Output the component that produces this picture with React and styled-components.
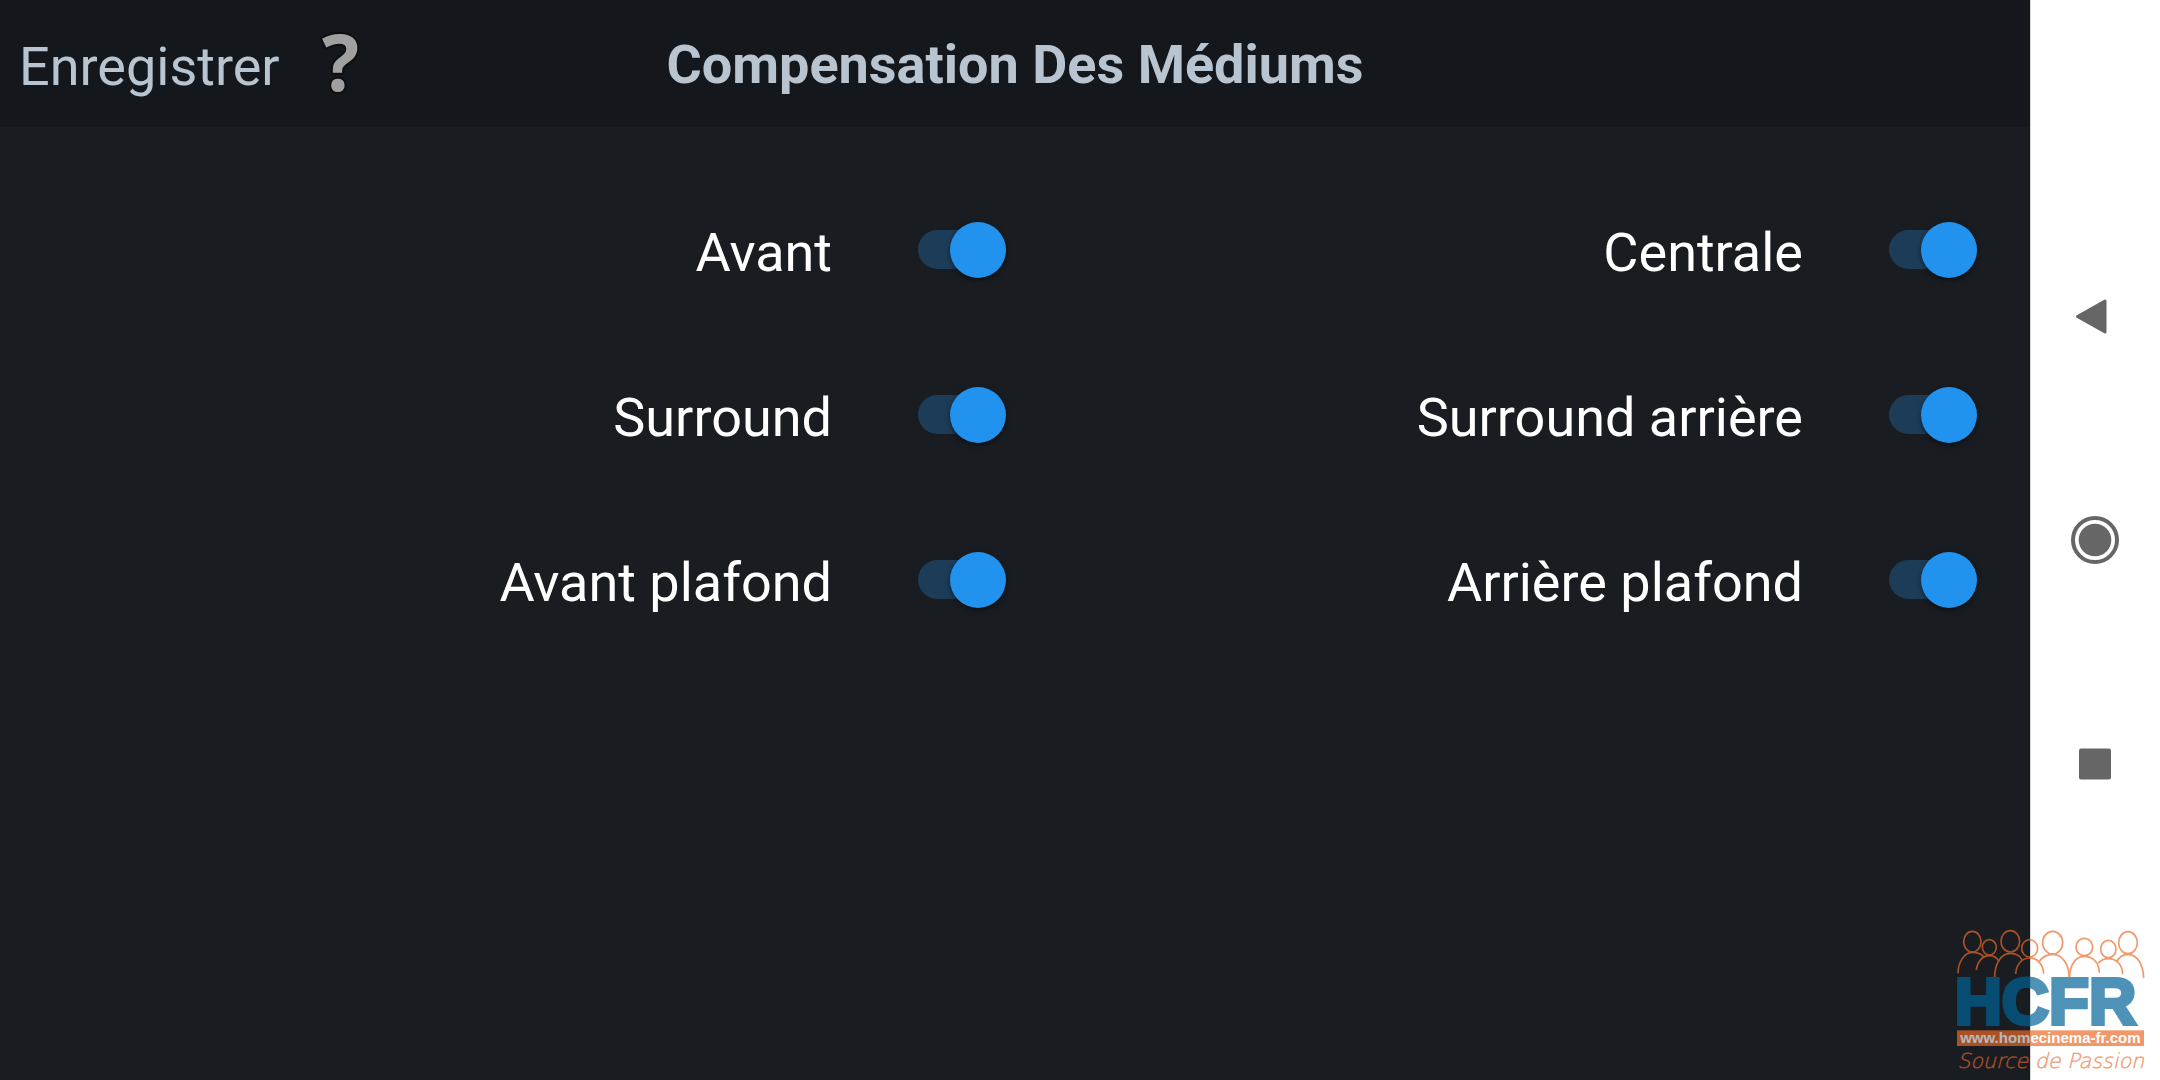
import React, { useState } from 'react';
import styled, { createGlobalStyle } from 'styled-components';

const channels = [
  { id: 'front', name: 'Avant' },
  { id: 'center', name: 'Centrale' },
  { id: 'surround', name: 'Surround' },
  { id: 'surroundBack', name: 'Surround arrière' },
  { id: 'topFront', name: 'Avant plafond' },
  { id: 'topRear', name: 'Arrière plafond' },
];

const App = () => {
  const [enabled, setEnabled] = useState({
    front: true,
    center: true,
    surround: true,
    surroundBack: true,
    topFront: true,
    topRear: true,
  });

  const handleToggle = (id) => {
    setEnabled({ ...enabled, [id]: !enabled[id] });
  };

  return (
    <Page>
      <GlobalStyle />
      <Screen>
        <Header>
          <HeaderActions>
            <SaveButton type="button">Enregistrer</SaveButton>
            <HelpButton type="button">?</HelpButton>
          </HeaderActions>
          <Title>Compensation Des Médiums</Title>
        </Header>
        <ChannelGrid>
          {channels.map((channel) => (
            <ChannelRow key={channel.id}>
              <ChannelLabel htmlFor={channel.id}>{channel.name}</ChannelLabel>
              <Switch
                type="checkbox"
                id={channel.id}
                checked={enabled[channel.id]}
                onChange={() => handleToggle(channel.id)}
              />
            </ChannelRow>
          ))}
        </ChannelGrid>
      </Screen>

      <NavBar>
        <NavButton type="button" aria-label="Back">
          <svg width="48" height="48" viewBox="0 0 48 48">
            <path
              d="M6.5 24.5 L34 9 V40 Z"
              fill="#666"
              stroke="#666"
              strokeWidth="3"
              strokeLinejoin="round"
            />
          </svg>
        </NavButton>
        <NavButton type="button" aria-label="Home">
          <svg width="48" height="48" viewBox="0 0 48 48">
            <circle cx="24" cy="24" r="22" fill="none" stroke="#666" strokeWidth="4" />
            <circle cx="24" cy="24" r="16.3" fill="#666" />
          </svg>
        </NavButton>
        <NavButton type="button" aria-label="Recents">
          <svg width="48" height="48" viewBox="0 0 48 48">
            <rect x="8" y="8.5" width="32" height="31" rx="2" fill="#666" />
          </svg>
        </NavButton>
      </NavBar>

      <Watermark viewBox="30 30 600 480">
        <g fill="none" stroke="#ec6a27" strokeWidth="5">
          <ellipse cx="97" cy="95" rx="26" ry="31" />
          <ellipse cx="148" cy="112" rx="21" ry="23" />
          <ellipse cx="211" cy="94" rx="28" ry="32" />
          <ellipse cx="269" cy="115" rx="24" ry="26" />
          <ellipse cx="338" cy="98" rx="30" ry="34" />
          <ellipse cx="433" cy="111" rx="25" ry="26" />
          <ellipse cx="505" cy="117" rx="23" ry="26" />
          <ellipse cx="564" cy="98" rx="28" ry="33" />
          <path d="M54 190 C54 158 72 127 97 127 C112 127 124 132 131 140" />
          <path d="M109 180 C112 154 128 137 148 137 C162 137 172 144 177 155" />
          <path d="M164 203 C164 160 184 130 211 130 C228 130 240 138 247 150" />
          <path d="M227 192 C229 162 246 144 269 144 C293 144 309 163 311 191" />
          <path d="M298 154 C308 140 322 133 338 133 C367 133 387 163 388 204" />
          <path d="M388 204 C390 162 408 139 433 139 C460 139 477 158 478 188" />
          <path d="M475 160 C483 150 493 146 505 146 C531 146 547 165 548 193" />
          <path d="M529 156 C537 141 549 133 564 133 C592 133 610 165 611 204" />
        </g>
        <BrandText x="44" y="343">HCFR</BrandText>
        <rect x="51" y="361" width="561" height="47" fill="#ec6a27" />
        <SiteText x="331" y="398">www.homecinema-fr.com</SiteText>
        <SloganText x="332" y="475">Source de Passion</SloganText>
      </Watermark>
    </Page>
  );
};

const GlobalStyle = createGlobalStyle`
  * {
    box-sizing: border-box;
  }
  body {
    margin: 0;
    background-color: #191c21;
    font-family: Roboto, "Liberation Sans", sans-serif;
  }
`;

const Page = styled.div`
  position: relative;
  display: flex;
  min-height: 100vh;
`;

const Screen = styled.main`
  flex: 1;
  background-color: #191c21;
`;

const Header = styled.header`
  display: grid;
  grid-template-columns: 1fr auto 1fr;
  align-items: center;
  height: 127px;
  padding: 0 19px;
  background-color: #14181c;
  color: #b8c4d0;
`;

const HeaderActions = styled.div`
  display: flex;
  align-items: center;
  gap: 42px;
`;

const HeaderButton = styled.button`
  padding: 0;
  border: none;
  background: none;
  color: inherit;
  cursor: pointer;
`;

const SaveButton = styled(HeaderButton)`
  padding-top: 6px;
  font-family: inherit;
  font-size: 54px;
`;

const HelpButton = styled(HeaderButton)`
  padding-bottom: 6px;
  color: #a0a0a0;
  font-family: "Noto Sans", sans-serif;
  font-size: 78px;
  font-weight: bold;
  line-height: 100px;
  -webkit-text-stroke: 4px #0d0f11;
  paint-order: stroke fill;
`;

const Title = styled.h1`
  margin: 0;
  padding-top: 2px;
  font-size: 54px;
  font-weight: bold;
`;

const ChannelGrid = styled.section`
  display: grid;
  grid-template-columns: 1fr 1fr;
  grid-auto-rows: 165px;
  padding: 40px 53px 0 35px;
`;

const ChannelRow = styled.div`
  display: flex;
  align-items: center;
  justify-content: flex-end;
  gap: 86px;
`;

const ChannelLabel = styled.label`
  padding-top: 6px;
  color: #fff;
  font-size: 54px;
`;

const Switch = styled.input`
  appearance: none;
  display: grid;
  align-items: center;
  width: 88px;
  height: 56px;
  margin: 0;
  cursor: pointer;

  &::before {
    content: "";
    grid-area: 1 / 1;
    width: 77px;
    height: 39px;
    border-radius: 20px;
    background-color: ${(props) => (props.checked ? '#1d3c58' : '#3a3f45')};
  }

  &::after {
    content: "";
    grid-area: 1 / 1;
    justify-self: ${(props) => (props.checked ? 'end' : 'start')};
    width: 56px;
    height: 56px;
    border-radius: 50%;
    background-color: ${(props) => (props.checked ? '#2193ee' : '#b0b6bc')};
    box-shadow: 0 2px 5px rgba(0, 0, 0, 0.5);
  }
`;

const NavBar = styled.nav`
  display: flex;
  flex-direction: column;
  align-items: center;
  justify-content: center;
  gap: 176px;
  width: 130px;
  background-color: #fff;
  box-shadow: inset 1px 0 #d8d8d8;
`;

const NavButton = styled.button`
  width: 48px;
  height: 48px;
  padding: 0;
  border: none;
  background: none;
  cursor: pointer;

  svg {
    display: block;
  }
`;

const Watermark = styled.svg`
  position: absolute;
  right: 10px;
  bottom: 0;
  width: 200px;
  height: 160px;
  opacity: 0.69;
  pointer-events: none;
`;

const BrandText = styled.text`
  fill: #006498;
  stroke: #006498;
  stroke-width: 12px;
  font-family: "Liberation Sans", Arial, sans-serif;
  font-size: 196px;
  font-weight: bold;
`;

const SiteText = styled.text`
  fill: #fff;
  font-family: "Liberation Sans", Arial, sans-serif;
  font-size: 45px;
  font-weight: bold;
  text-anchor: middle;
`;

const SloganText = styled.text`
  fill: #ec6a27;
  stroke: #ec6a27;
  stroke-width: 1px;
  font-family: "DejaVu Sans Light", "DejaVu Sans", sans-serif;
  font-size: 62px;
  font-style: italic;
  font-weight: 200;
  text-anchor: middle;
`;

export default App;
